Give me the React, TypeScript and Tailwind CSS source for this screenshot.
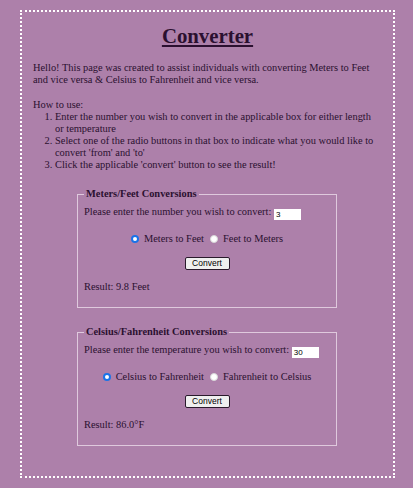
import React from 'react';

function Radio({ checked }: { checked: boolean }) {
  return checked ? (
    <span className="inline-block w-[8px] h-[8px] rounded-full border-[2px] border-[#1a73e8] bg-white align-[-1px] shadow-[inset_0_0_0_1px_#fff]" />
  ) : (
    <span className="inline-block w-[8px] h-[8px] rounded-full border border-[#d8d8d8] bg-white align-[-1px]" />
  );
}

interface BoxProps {
  title: string;
  prompt: string;
  value: string;
  from: string;
  to: string;
  result: string;
  className: string;
}

function ConvertBox({ title, prompt, value, from, to, result, className }: BoxProps) {
  return (
    <fieldset className={`ml-[44px] w-[260px] border border-[#dfc9dd] px-[6px] pt-[6px] pb-[14px] ${className}`}>
      <legend className="px-[2px] font-bold">{title}</legend>
      <p className="leading-[12px]">
        {prompt}{' '}
        <span className="inline-block w-[27px] h-[11px] bg-white align-[-2px] pl-[2px] font-['Liberation_Sans',sans-serif] text-[8px] leading-[11px] text-black">
          {value}
        </span>
      </p>
      <p className="mt-[13px] text-center">
        <Radio checked />
        <span className="ml-[5px]">{from}</span>
        <span className="ml-[6px]"><Radio checked={false} /></span>
        <span className="ml-[5px]">{to}</span>
      </p>
      <p className="mt-[12px] flex justify-center">
        <button className="w-[45px] h-[13px] rounded-[2px] border border-[#2a1a2c] bg-[#efefef] font-['Liberation_Sans',sans-serif] text-[8.5px] leading-[11px] text-black">
          Convert
        </button>
      </p>
      <p className="mt-[11px]">{result}</p>
    </fieldset>
  );
}

export default function App() {
  return (
    <div className="min-h-[488px] bg-[#ad80aa] pt-[10px] pb-[11px] font-['Liberation_Serif',serif] text-[10.4px] leading-[12px] text-[#2b1030]">
      <div className="ml-[20px] w-[375px] border-2 border-dotted border-white px-[11px] pt-[12px] pb-[30px]">
        <h1 className="text-center text-[20.8px] leading-[24px] font-bold underline decoration-[2px] underline-offset-[2px]">
          Converter
        </h1>
        <p className="mt-[14px]">
          Hello! This page was created to assist individuals with converting Meters to Feet and vice versa &amp; Celsius to Fahrenheit and vice versa.
        </p>
        <p className="mt-[13px]">How to use:</p>
        <ol className="list-decimal pl-[22px]">
          <li>Enter the number you wish to convert in the applicable box for either length or temperature</li>
          <li>Select one of the radio buttons in that box to indicate what you would like to convert 'from' and 'to'</li>
          <li>Click the applicable 'convert' button to see the result!</li>
        </ol>
        <ConvertBox
          className="mt-[17px]"
          title="Meters/Feet Conversions"
          prompt="Please enter the number you wish to convert:"
          value="3"
          from="Meters to Feet"
          to="Feet to Meters"
          result="Result: 9.8 Feet"
        />
        <ConvertBox
          className="mt-[18px]"
          title="Celsius/Fahrenheit Conversions"
          prompt="Please enter the temperature you wish to convert:"
          value="30"
          from="Celsius to Fahrenheit"
          to="Fahrenheit to Celsius"
          result="Result: 86.0°F"
        />
      </div>
    </div>
  );
}
